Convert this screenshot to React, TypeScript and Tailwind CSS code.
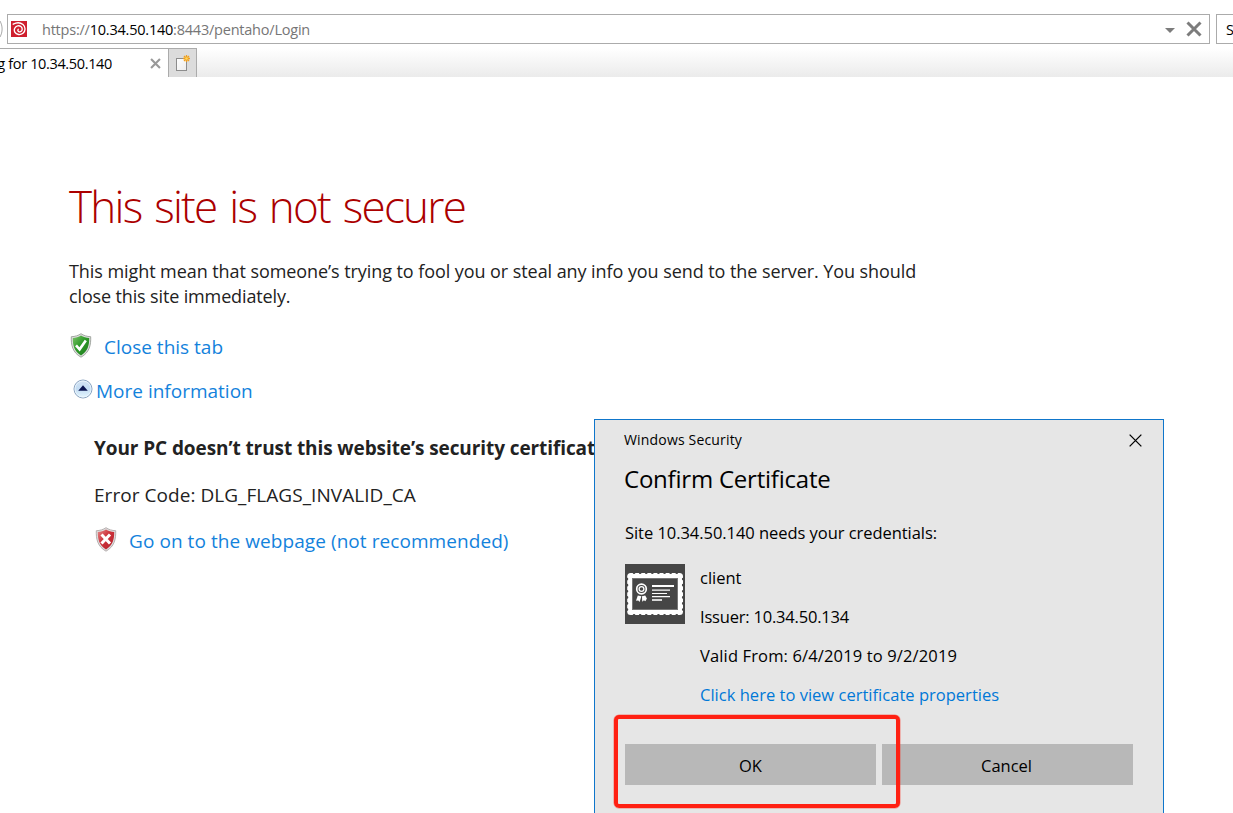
import React from 'react';

function SwirlIcon() {
  return (
    <svg width="16" height="16" viewBox="0 0 16 16" className="block shrink-0">
      <rect width="16" height="16" fill="#cf1f2e" />
      <path
        d="M2.2 3.2C5 1.6 9.2 1.2 12 3.6c2.8 2.500 2.600 6.600 0 8.700-2.600 2.100-6.800 1.500-8.200-1.200-1.300-2.600.2-5.600 2.800-6.200 2.500-.6 4.700 1.100 4.600 3.300-.1 1.900-1.600 2.900-3 2.600-1.300-.3-1.700-1.600-1-2.500"
        fill="none"
        stroke="#fff"
        strokeWidth="1.350"
        strokeLinecap="round"
      />
    </svg>
  );
}

function Cross({ size, width, color }: { size: number; width: number; color: string }) {
  return (
    <svg width={size} height={size} viewBox={`0 0 ${size} ${size}`} className="block shrink-0">
      <path
        d={`M${width / 2} ${width / 2}L${size - width / 2} ${size - width / 2}M${size - width / 2} ${width / 2}L${width / 2} ${size - width / 2}`}
        stroke={color}
        strokeWidth={width}
      />
    </svg>
  );
}

function NewTabIcon() {
  return (
    <svg width="16" height="17" viewBox="0 0 16 17" className="block">
      <defs>
        <linearGradient id="page" x1="0" y1="0" x2="1" y2="1">
          <stop offset="0" stopColor="#ffffff" />
          <stop offset="1" stopColor="#ececec" />
        </linearGradient>
      </defs>
      <rect x="1.500" y="3.500" width="10" height="12" fill="url(#page)" stroke="#8c8c8c" />
      <g stroke="#f0a020" strokeWidth="1.300">
        <path d="M11.500 0v7M8 3.500h7M9 1l5 5M14 1l-5 5" />
      </g>
      <circle cx="11.500" cy="3.500" r="1.300" fill="#ffd75a" />
    </svg>
  );
}

function Shield({ kind }: { kind: 'ok' | 'bad' }) {
  const ok = kind === 'ok';
  return (
    <svg width="22" height="25" viewBox="0 0 22 25" className="block shrink-0">
      <defs>
        <linearGradient id={`sh-${kind}`} x1="0" y1="0" x2="1" y2="1">
          <stop offset="0" stopColor={ok ? '#7fc46a' : '#e58a8a'} />
          <stop offset="0.45" stopColor={ok ? '#2f9a2a' : '#cc3038'} />
          <stop offset="1" stopColor={ok ? '#1d7a1b' : '#b42630'} />
        </linearGradient>
      </defs>
      <path
        d="M11 .7C8.500 2.500 5 3.600 1.300 3.700 1 12 2.500 19.500 11 24.200 19.500 19.500 21 12 20.700 3.700 17 3.600 13.500 2.500 11 .7Z"
        fill="#dedede"
        stroke={ok ? '#9a9f98' : '#b0a8a8'}
        strokeWidth=".9"
      />
      <path
        d="M11 2.500C8.800 3.900 5.700 4.700 2.800 4.900 2.700 12 4.200 18.300 11 22.400 17.800 18.300 19.300 12 19.200 4.900 16.300 4.700 13.200 3.900 11 2.500Z"
        fill={`url(#sh-${kind})`}
      />
      {ok ? (
        <path d="M6 12.300l3.600 4L15.800 7.500" fill="none" stroke="#fff" strokeWidth="2.600" />
      ) : (
        <path d="M6.500 7.500l8.500 9M15 7.500l-8.500 9" stroke="#fff" strokeWidth="3" />
      )}
    </svg>
  );
}

function CollapseIcon() {
  return (
    <svg width="20" height="20" viewBox="0 0 20 20" className="block shrink-0">
      <defs>
        <linearGradient id="ball" x1="0" y1="0" x2="0" y2="1">
          <stop offset="0" stopColor="#d3e2f2" />
          <stop offset=".5" stopColor="#c3dcf3" />
          <stop offset="1" stopColor="#e6f8ff" />
        </linearGradient>
      </defs>
      <circle cx="10" cy="10" r="9" fill="url(#ball)" stroke="#8aa3c0" strokeWidth="1" />
      <circle cx="10" cy="10" r="8" fill="none" stroke="#eef6fd" strokeWidth=".8" />
      <path d="M5.200 11.800L10 6.300l4.800 5.500Z" fill="#0a1450" />
    </svg>
  );
}

function CertificateIcon() {
  return (
    <svg width="60" height="60" viewBox="0 0 60 60" className="block shrink-0">
      <rect width="60" height="60" fill="#464646" />
      <rect x="2.200" y="9" width="55.800" height="42" rx="3.500" fill="#fff" />
      <g fill="none" stroke="#464646" strokeWidth="2.600" strokeLinecap="round">
        <path d="M9 8.800H56" strokeDasharray=".1 6" />
        <path d="M9 51.200H56" strokeDasharray=".1 6" />
        <path d="M2 15V48" strokeDasharray=".1 6" />
        <path d="M58.200 15V48" strokeDasharray=".1 6" />
      </g>
      <rect x="7.500" y="14.500" width="45" height="31" fill="#464646" stroke="#767676" />
      <circle cx="16.500" cy="25" r="4.800" fill="none" stroke="#fff" strokeWidth="1.700" />
      <circle cx="16.500" cy="25" r="2.400" fill="none" stroke="#fff" strokeWidth="1.300" />
      <path
        d="M12.800 31.500l3.600.8-1.800 5.700-1.300-1.600-2.300.4ZM20.200 31.500l-3.200.8.200 5.500 1.700-1.500 1.500 1 1.500-2.800Z"
        fill="#fff"
      />
      <path d="M27 22h22" stroke="#fff" strokeWidth="2" />
      <path d="M27 26.200h18M27 29.500h15M27 32.700h18" stroke="#fff" strokeWidth="1.200" />
      <path d="M27 36h10" stroke="#d8d8d8" strokeWidth="2" />
    </svg>
  );
}

function BrowserBar() {
  return (
    <header className="h-[77px] overflow-hidden">
      <div className="flex h-[48px] pt-[14px]">
        <div className="flex h-[30px] w-[7px] shrink-0 items-center overflow-hidden">
          <svg width="3" height="20" viewBox="0 0 3 20" className="block">
            <path d="M0 2C2.800 7 2.800 13 0 18" fill="none" stroke="#a8a8a8" />
          </svg>
        </div>
        <div className="flex h-[30px] w-[1203px] shrink-0 items-center border border-[#ababab] bg-white pr-[7px] pl-[3px]">
          <SwirlIcon />
          <div className="ml-[15px] grow pt-[2px] text-[14.5px] leading-[28px] tracking-[-0.22px] whitespace-nowrap text-[#767676]">
            https://<span className="text-black">10.34.50.140</span>:8443/pentaho/Login
          </div>
          <svg width="10" height="5" viewBox="0 0 10 5" className="mt-[2px] mr-[11px] block">
            <path d="M0 0h10L5 5Z" fill="#7c7c7c" />
          </svg>
          <Cross size={16} width={3} color="#7c7c7c" />
        </div>
        <div className="ml-[6px] h-[30px] w-[40px] shrink-0 overflow-hidden border border-[#ababab] pt-px pl-[9px] text-[14.5px] leading-[28px] text-black">
          S
        </div>
      </div>
      <div className="flex h-[29px] bg-linear-to-b from-white to-[#ebebeb]">
        <div className="flex w-[168px] items-center border-t border-[#ababab] bg-white pr-[7px]">
          <div className="flex w-[112px] justify-end overflow-hidden pt-px text-[14.5px] leading-[26px] tracking-[-0.35px] whitespace-nowrap text-black">
            g for 10.34.50.140
          </div>
          <div className="ml-auto">
            <Cross size={11} width={2.1} color="#999999" />
          </div>
        </div>
        <div className="w-[29px] border border-b-0 border-[#ababab] bg-[#dcdcdc] pt-[6px] pl-[6px]">
          <NewTabIcon />
        </div>
      </div>
    </header>
  );
}

function WarningPage() {
  return (
    <main className="pt-[99px] pl-[69px] whitespace-nowrap text-[#222222]">
      <h1 className="text-[44px] leading-[60px] font-light tracking-[-1.75px] text-[#ab0000] [word-spacing:3px]">
        This site is not secure
      </h1>
      <p className="mt-[23px] text-[18px] leading-[25px] tracking-[-0.07px]">
        This might mean that someone’s trying to fool you or steal any info you send to the server. You should
        <br />
        <span className="tracking-[-0.14px]">close this site immediately.</span>
      </p>
      <div className="mt-[24px] flex h-[28px] items-start pl-px text-[19px] leading-[28px] text-[#1382dc]">
        <Shield kind="ok" />
        <a className="ml-[12px]">Close this tab</a>
      </div>
      <div className="mt-[16px] flex h-[28px] items-start pl-[4px] text-[19px] leading-[28px] text-[#1382dc]">
        <div className="mt-[2px]">
          <CollapseIcon />
        </div>
        <a className="ml-[3px]">More information</a>
      </div>
      <div className="mt-[29px] pl-[25px] text-[19px] leading-[28px]">
        <p className="font-bold tracking-[-0.09px]">Your PC doesn’t trust this website’s security certificate.</p>
        <p className="mt-[19px] tracking-[0.05px]">Error Code: DLG_FLAGS_INVALID_CA</p>
        <div className="mt-[18px] flex h-[28px] items-start pl-px text-[#1382dc]">
          <Shield kind="bad" />
          <a className="ml-[12px] tracking-[0.07px]">Go on to the webpage (not recommended)</a>
        </div>
      </div>
    </main>
  );
}

function CertificateDialog() {
  return (
    <section className="absolute top-[419px] left-[594px] h-[420px] w-[570px] border border-[#0f76cb] bg-[#e6e6e6] px-[30px] pt-[10px] whitespace-nowrap text-black">
      <div className="flex h-[20px] justify-between">
        <span className="-ml-px text-[14px] leading-[20px] tracking-[0.17px]">Windows Security</span>
        <div className="mt-[4px] -mr-[9px] w-[13px]">
          <Cross size={13} width={1.3} color="#000000" />
        </div>
      </div>
      <h2 className="mt-[13px] -ml-px text-[24px] leading-[32px] tracking-[-0.22px]">Confirm Certificate</h2>
      <p className="mt-[26px] text-[16.5px] leading-[24px] tracking-[-0.05px]">Site 10.34.50.140 needs your credentials:</p>
      <div className="mt-[19px] flex gap-[15px]">
        <CertificateIcon />
        <div className="flex flex-col gap-[15px] pt-[2px] text-[16.5px] leading-[24px]">
          <span>client</span>
          <span className="tracking-[-0.2px]">Issuer: 10.34.50.134</span>
          <span className="tracking-[0.14px]">Valid From: 6/4/2019 to 9/2/2019</span>
          <a className="tracking-[0.02px] text-[#0078d7]">Click here to view certificate properties</a>
        </div>
      </div>
      <div className="mt-[37px] flex gap-[6px] text-[16.5px]">
        <button className="h-[41px] w-[251px] bg-[#b8b8b8] pt-[4px]">OK</button>
        <button className="h-[41px] w-[251px] bg-[#b8b8b8] pt-[4px] pr-[2px]">Cancel</button>
      </div>
      <div className="absolute top-[295px] left-[19px] h-[93px] w-[286px] rounded-[5px] border-4 border-[#ff2012] ring-[0.5px] ring-[#ff2012]/50" />
    </section>
  );
}

export default function App() {
  return (
    <div className="relative h-[813px] w-[1233px] overflow-hidden bg-white font-['Open_Sans','Noto_Sans',sans-serif]">
      <BrowserBar />
      <WarningPage />
      <CertificateDialog />
    </div>
  );
}
